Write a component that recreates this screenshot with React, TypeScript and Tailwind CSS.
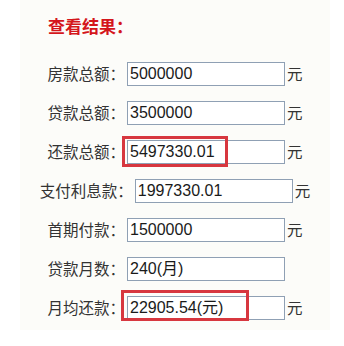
import React from 'react';

type Row = {
  label: string;
  value: string;
  unit: boolean;
  mark?: 'short' | 'long';
};

const rows: Row[] = [
  { label: '房款总额：', value: '5000000', unit: true },
  { label: '贷款总额：', value: '3500000', unit: true },
  { label: '还款总额：', value: '5497330.01', unit: true, mark: 'short' },
  { label: '支付利息款：', value: '1997330.01', unit: true },
  { label: '首期付款：', value: '1500000', unit: true },
  { label: '贷款月数：', value: '240(月)', unit: false },
  { label: '月均还款：', value: '22905.54(元)', unit: true, mark: 'long' },
];

const cjk = "font-['Microsoft_YaHei','Noto_Sans_CJK_SC',sans-serif]";

export default function App() {
  return (
    <div className="w-[344px] h-[346px] bg-white">
      <div className="ml-[20px] w-[310px] h-[330px] bg-[#fcfcf9] pt-[14px]">
        <h1 className={`${cjk} pl-[28px] text-[17px] leading-[24px] font-bold text-[#d4161c]`}>
          查看结果：
        </h1>

        <div className="mt-[16px] flex flex-col">
          {rows.map((row) => (
            <div key={row.label} className="h-[39px] flex items-center justify-center">
              <span className={`${cjk} text-[15.5px] text-[#333] leading-none`}>{row.label}</span>
              <div className="relative ml-[2px]">
                <div className="w-[158px] h-[24px] border border-[#8fa0b4] bg-white pl-[2px] flex items-center font-['Liberation_Sans',Arial,'Noto_Sans_CJK_SC',sans-serif] text-[16px] text-[#1a1a1a] leading-none">
                  {row.value}
                </div>
                {row.mark === 'short' && (
                  <div className="absolute left-[-5px] top-[-4px] w-[106px] h-[31px] border-[3px] border-[#d7373f]" />
                )}
                {row.mark === 'long' && (
                  <div className="absolute left-[-6px] top-[-6px] w-[128px] h-[31px] border-[3px] border-[#d7373f]" />
                )}
              </div>
              <span
                className={`${cjk} ml-[2px] text-[15.5px] text-[#333] leading-none ${row.unit ? '' : 'invisible'}`}
              >
                元
              </span>
            </div>
          ))}
        </div>
      </div>
    </div>
  );
}
